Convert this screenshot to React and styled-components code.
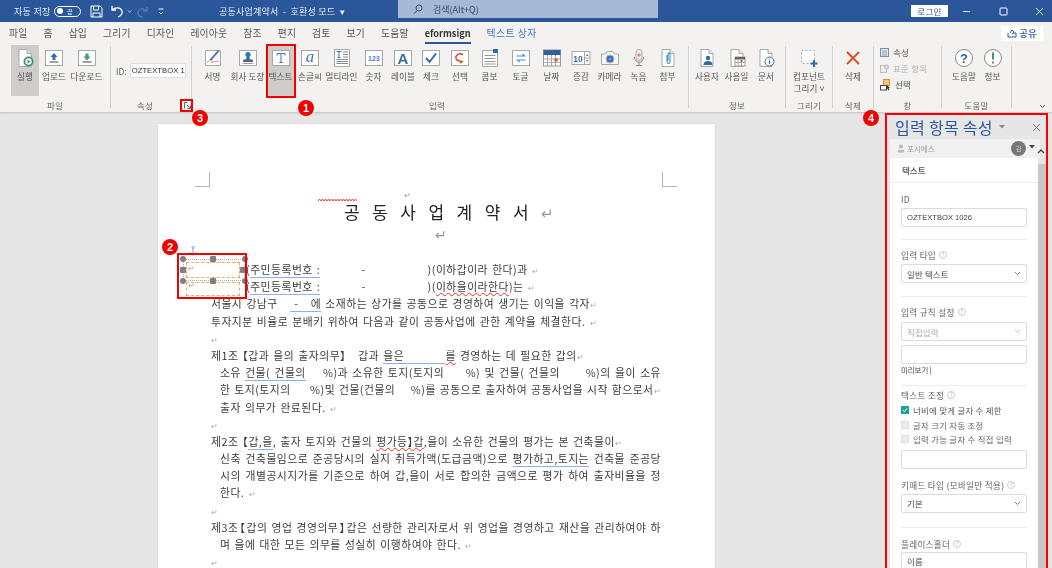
import React from "react";
import styled, { createGlobalStyle } from "styled-components";

const Global = createGlobalStyle`
  html, body { margin: 0; padding: 0; background: #e6e6e6; }
  body { font-family: "Noto Sans CJK KR", "Noto Sans", sans-serif; }
  * { box-sizing: border-box; }
`;

const Screen = styled.div`
  position: relative; width: 1052px; height: 568px; overflow: hidden;
  display: flex; flex-direction: column; color: #444; background: #e6e6e6; filter: blur(0.3px);
`;

/* ---- title bar ---- */
const TitleBar = styled.header`
  height: 22px; background: #2b579a; color: #e8edf5; display: flex; align-items: center;
  font-size: 9px; flex: none;
`;
const AutoSave = styled.span`margin-left: 14px; width: 40px; letter-spacing: .3px;`;
const Toggle = styled.span`
  width: 27px; height: 11px; border: 1px solid #fff; border-radius: 6px; display: flex;
  align-items: center; padding-left: 2px; font-size: 6px; gap: 4px;
  &::before { content: ""; width: 6px; height: 6px; border-radius: 50%; background: #fff; }
`;
const QuickIcon = styled.span`
  margin-left: ${p => p.$ml}px; display: flex; align-items: center;
  opacity: ${p => (p.$dim ? 0.3 : 1)};
`;
const DocTitle = styled.div`margin-left: 55px; width: 179px; font-size: 9px; white-space: pre; letter-spacing: .2px;`;
const SearchBox = styled.div`
  width: 260px; height: 18px; margin-top: -4px; background: #a7b9d4; color: #2f4a73; display: flex; align-items: center;
  padding-left: 15px; gap: 10px; font-size: 9px;
`;
const LoginButton = styled.button`
  margin-left: 253px; width: 37px; height: 12px; background: #fff; color: #2b579a; border: 0; padding: 0;
  font: 8.5px/12px "Noto Sans CJK KR", sans-serif; letter-spacing: .4px;
`;
const WindowControls = styled.div`
  display: flex; margin-left: 14px; width: 88px; justify-content: space-between; align-items: center; padding-right: 6px;
`;

/* ---- tabs ---- */
const TabRow = styled.nav`
  height: 22px; background: #f3f2f1; display: flex; align-items: center; padding-left: 9px; gap: 16px; flex: none;
  position: relative;
`;
const Tab = styled.span`
  font-size: ${p => (p.$active ? 9.2 : 9.8)}px; line-height: 22px; height: 22px; white-space: nowrap; letter-spacing: ${p => (p.$context ? ".5px" : p.$active ? 0 : ".2px")};
  color: ${p => (p.$context ? "#3e78c4" : p.$active ? "#333" : "#555")};
  font-weight: ${p => (p.$active ? 700 : 400)};
  border-bottom: ${p => (p.$active ? "2px solid #2b579a" : "0")};
`;
const ShareButton = styled.button`
  margin-left: auto; margin-right: 9px; width: 42px; height: 15px; background: #fff; border: 0; color: #2b579a;
  font: 500 9.5px/15px "Noto Sans CJK KR", sans-serif; display: flex; align-items: center; justify-content: center; gap: 2px; padding: 0;
`;

/* ---- ribbon ---- */
const Ribbon = styled.section`
  height: 68px; background: #f3f2f1; display: flex; padding-top: 2px; flex: none; position: relative;
  box-shadow: 0 1px 2px rgba(0,0,0,.18); z-index: 1;
`;
const Group = styled.div`
  width: ${p => p.$w}px; height: 62px; border-right: 1px solid #d2d0ce; display: flex; flex-direction: column; flex: none;
`;
const GroupBody = styled.div`
  flex: 1; margin-top: -1px; display: flex; padding-left: ${p => p.$pl || 0}px; min-height: 0;
`;
const GroupLabel = styled.div`
  height: 12px; margin-bottom: -3px; line-height: 12px; font-size: 8.5px; color: #666; text-align: center;
  padding-right: ${p => p.$pr || 0}px; letter-spacing: .3px;
`;
const Tool = styled.button`
  width: ${p => p.$w}px; height: 51px; border: 0; padding: 3px 0 0; display: flex; flex-direction: column; align-items: center;
  background: ${p => (p.$on ? "#cfcdcb" : "transparent")}; color: ${p => (p.$dim ? "#aaa" : "#555")};
  font: 8.6px/12px "Noto Sans CJK KR", sans-serif; flex: none; white-space: nowrap; letter-spacing: .1px;
  svg { display: block; margin-bottom: 2px; flex: none; }
`;
const IdField = styled.div`
  display: flex; align-items: center; margin-top: 18px; height: 15px; padding-left: 5px; font-size: 8.5px; color: #666; gap: 3px;
`;
const IdInput = styled.div`
  width: 56px; height: 15px; background: #fff; border: 1px solid #e1dfdd; color: #333; font: 7.7px/13px "Liberation Sans", sans-serif;
  padding-left: 1px; white-space: nowrap;
`;
const MiniList = styled.div`display: flex; flex-direction: column; padding: 1px 0 0 6px; gap: 3px;`;
const MiniItem = styled.div`
  height: 13px; display: flex; align-items: center; gap: 4px; font-size: 8.5px; line-height: 13px;
  color: ${p => (p.$dim ? "#b5b3b1" : "#555")}; letter-spacing: .2px;
`;
const Collapse = styled.span`position: absolute; right: 6px; bottom: 3px; display: flex;`;

/* ---- main ---- */
const Main = styled.main`flex: 1; min-height: 0; display: flex; overflow: hidden; background: #e6e6e6;`;
const Page = styled.article`
  position: relative; margin: 12px 0 0 158px; width: 557px; height: 620px; background: #fff; flex: none; padding: 64px 54px 0 53px;
  font-size: 10.8px; line-height: 17.2px; color: #3c3c3c; box-shadow: 0 0 2px rgba(0,0,0,.1);
`;
const Crop = styled.i`
  position: absolute; top: 48px; width: 15px; height: 15px; border-bottom: 1px solid #b5b5b5;
  ${p => (p.$right ? "left: 504px; border-left: 1px solid #b5b5b5;" : "left: 37px; border-right: 1px solid #b5b5b5;")}
`;
const TitleWave = styled.span`position: absolute; left: 160px; top: 74px; display: flex;`;
const MarkLine = styled.div`
  height: ${p => p.$h}px; line-height: ${p => p.$h}px; margin-bottom: ${p => p.$mb || 0}px; padding-left: ${p => p.$pl}px; color: #999; font-size: ${p => p.$fs || 9}px;
`;
const TitleLine = styled.h1`
  margin: 0; height: 21px; padding-left: 133px; font: 400 17px/21px "Noto Sans CJK KR", sans-serif; color: #222; white-space: pre;
  word-spacing: 8.7px;
`;
const TitleMark = styled.span`color: #999; font-size: 15px;`;
const Line = styled.div`
  height: 17.2px; white-space: pre; padding-left: ${p => p.$indent || 0}px; word-spacing: ${p => (p.$fit ? 0 : 1.2)}px;
  letter-spacing: .5px; font-feature-settings: "halt";
  ${p => (p.$fit ? "text-align: justify; text-align-last: justify; white-space: pre-wrap;" : "")}
`;
const Pilcrow = styled.span`color: #aaa; font-size: 8px;`;
const Blue = styled.span`border-bottom: 1.5px solid #8fb1e6;`;
const Wavy = styled.span`text-decoration: underline wavy #e03030; text-decoration-thickness: 1px; text-underline-offset: 1px;`;

/* ---- task pane ---- */
const Pane = styled.aside`
  margin: 1px 4px 0 auto; width: 163px; flex: none; border: 2px solid #ff0000; border-bottom: 0; background: #e6e6e6; display: flex; flex-direction: column; min-height: 0;
  position: relative;
`;
const PaneHead = styled.div`
  height: 24px; display: flex; align-items: center; padding-left: 8px; flex: none;
`;
const PaneTitle = styled.h2`
  margin: 0; font: 400 16px/22px "Noto Sans CJK KR", sans-serif; color: #2b579a; white-space: nowrap; letter-spacing: .3px;
`;
const PaneUser = styled.div`
  height: 19px; margin: 0 6px 0 3px; background: #f1f1f1; display: flex; align-items: center; padding-left: 7px; font-size: 7.5px; color: #999; gap: 2px; flex: none; position: relative;
`;
const Avatar = styled.span`
  position: absolute; left: 121px; top: 2px; width: 15px; height: 15px; border-radius: 50%; background: #777; color: #ddd;
  font-size: 6px; line-height: 15px; text-align: center;
`;
const UserCaret = styled.span`position: absolute; left: 139px; top: 6px; display: flex;`;
const PaneBody = styled.div`flex: 1; display: flex; min-height: 0; padding-left: 3px;`;
const Form = styled.div`width: 148px; background: #fff; flex: none; overflow: hidden;`;
const FormHead = styled.div`
  height: 25px; border-bottom: 1px solid #ececec; padding-left: 12px; font-size: 8.5px; line-height: 24px; font-weight: 500; color: #555;
`;
const Section = styled.div`
  margin: 0 11px; padding-top: ${p => p.$pt}px; padding-bottom: ${p => p.$pb || 0}px; border-bottom: ${p => (p.$end ? "1px solid #ececec" : 0)};
`;
const FieldLabel = styled.div`
  height: 12px; line-height: 12px; margin-top: ${p => p.$mt || 0}px; margin-bottom: ${p => p.$mb ?? 3}px; font-size: 8.6px; color: #666; display: flex; align-items: center; gap: 3px;
  letter-spacing: .3px; white-space: nowrap;
`;
const Hint = styled.span`
  width: 8px; height: 8px; border-radius: 50%; border: 1px solid #ccc; color: #bbb; font-size: 6px; line-height: 6px; text-align: center; flex: none;
`;
const TextBox = styled.div`
  height: 19px; margin-top: ${p => p.$mt || 0}px; border: 1px solid #dcdcdc; border-radius: 2px; background: #fff; display: flex; align-items: center; justify-content: space-between;
  padding: 0 5px 0 5px; font-size: 8.4px; color: ${p => (p.$dim ? "#aaa" : "#444")}; white-space: nowrap; letter-spacing: .2px;
`;
const LatinValue = styled.span`font: 7.6px "Liberation Sans", sans-serif; letter-spacing: 0;`;
const Preview = styled.div`height: 12px; font-size: 7.4px; line-height: 12px; color: #444;`;
const CheckRow = styled.div`
  height: 14.5px; display: flex; align-items: center; gap: 4px; font-size: 8.4px; color: ${p => (p.$on ? "#555" : "#666")}; white-space: nowrap; letter-spacing: .3px;
`;
const CheckBox = styled.span`
  width: 8px; height: 8px; flex: none; background: ${p => (p.$on ? "#1aa39a" : "#ececec")}; border: 1px solid ${p => (p.$on ? "#1aa39a" : "#ddd")};
  display: flex; align-items: center; justify-content: center;
`;
const ScrollTrack = styled.div`
  flex: none; width: 8px; background: #c8c8c8; margin-top: 6px;
`;
const ScrollUp = styled.span`position: absolute; right: 1px; top: 34px; z-index: 2; display: flex;`;
const PaneClose = styled.span`margin-left: auto; margin-right: 5px; display: flex;`;

/* ---- annotations ---- */
const Badge = styled.span`
  position: absolute; left: ${p => p.$x - 8}px; top: ${p => p.$y - 8}px; width: 16px; height: 16px; border-radius: 50%;
  background: #f00000; color: #fff; font: 700 11px/16px "Liberation Sans", sans-serif; text-align: center; z-index: 5;
`;
const RedBox = styled.div`
  position: absolute; left: ${p => p.$x}px; top: ${p => p.$y}px; width: ${p => p.$w}px; height: ${p => p.$h}px;
  border: 2px solid #f00000; z-index: 4;
`;
const FieldFrame = styled.div`
  position: absolute; left: ${p => p.$x}px; top: ${p => p.$y}px; width: ${p => p.$w}px; height: ${p => p.$h}px;
  border: 1px ${p => (p.$grey ? "dotted #aaa" : "dashed #f5a55c")}; z-index: 3;
`;
const Handle = styled.i`
  position: absolute; left: ${p => p.$x - 3}px; top: ${p => p.$y - 3}px; width: 6px; height: 6px; background: #7f7f7f;
  border-radius: ${p => (p.$round ? "50%" : "1px")}; z-index: 3;
`;
const FloatingMark = styled.span`
  position: absolute; left: ${p => p.$x}px; top: ${p => p.$y}px; font-size: 8px; line-height: 10px; color: #aaa; z-index: 3;
`;
const AnchorMark = styled.span`position: absolute; left: 189px; top: 246px; display: flex; z-index: 3;`;

/* ---- icons ---- */
const Frame = ({ children, fill = "#fff" }) => (
  <>
    <rect x="1.5" y="2.5" width="17" height="15" fill={fill} stroke="#a8a8a8" />
    {children}
  </>
);
const Paper = ({ children }) => (
  <>
    <path d="M4 1.5h8l4 4v13H4z" fill="#fff" stroke="#a8a8a8" />
    <path d="M12 1.5v4h4" fill="#eee" stroke="#a8a8a8" />
    {children}
  </>
);
const ICONS = {
  run: <Paper><circle cx="13.5" cy="13.5" r="5" fill="#3f8f6f" /><circle cx="13.5" cy="13.5" r="3.2" fill="#fff" /><path d="M12.5 11.5l3 2-3 2z" fill="#3f8f6f" /></Paper>,
  upload: <Frame><path d="M10 5l3.5 4H11.5v3h-3V9H6.5z" fill="#2b6cb0" /><path d="M5.5 14h9" stroke="#777" strokeWidth="1.4" /></Frame>,
  download: <Frame><path d="M10 12.5l3.5-4H11.5v-3h-3v3H6.5z" fill="#4c9a6a" /><path d="M5.5 14h9" stroke="#777" strokeWidth="1.4" /></Frame>,
  sign: <><path d="M2.5 2.5v15h15v-15z" fill="#fff" stroke="#a8a8a8" /><path d="M4 15c3-4 5-5 5-3s-2 3 1 2 5 0 6-1" fill="none" stroke="#e38f7c" /><path d="M7 11l8-9 1.5 1.2-8 9-2 .6z" fill="#4f7cb8" /></>,
  stamp: <Frame><circle cx="10" cy="6.5" r="2.6" fill="#3a6ea8" /><path d="M8.8 8h2.4l.6 3 3.2 1v2H5v-2l3.2-1z" fill="#3a6ea8" /><path d="M4.5 15.5h11" stroke="#e38f7c" /></Frame>,
  text: <Frame><path d="M6 5.5h8v2M6 7.5v-2M10 5.5v9M8.2 14.5h3.6" fill="none" stroke="#3f78b8" /></Frame>,
  hand: <Frame><text x="10" y="14" textAnchor="middle" fontFamily="Liberation Serif" fontStyle="italic" fontSize="17" fill="#3f78b8">a</text></Frame>,
  multi: <><path d="M2.5 1.5h15v17h-15z" fill="#fff" stroke="#a8a8a8" /><path d="M4.5 3.5h5M7 3.5v6M5.5 9.5h3" stroke="#3f78b8" fill="none" /><path d="M11 4h5M11 6.5h5M11 9h5M4.5 11.5h11.5M4.5 13.5h11.5M4.5 15.5h11.5" stroke="#888" /></>,
  number: <Frame><text x="10" y="13" textAnchor="middle" fontFamily="Liberation Sans" fontWeight="700" fontSize="7" fill="#4f7cb8">123</text></Frame>,
  label: <Frame><text x="10" y="15.5" textAnchor="middle" fontFamily="Liberation Sans" fontWeight="700" fontSize="15" fill="#3a6ea8">A</text></Frame>,
  check: <Frame><path d="M5 10l3.5 4L15 5.5" fill="none" stroke="#2f6fb8" strokeWidth="2" /></Frame>,
  select: <Frame><path d="M13 7c-2-2-6-1-7 1.500s1.500 4.500 4 4.500l2 .5-2 1.500" fill="none" stroke="#d9512c" strokeWidth="1.600" /></Frame>,
  combo: <><path d="M2.500 2.500h15v16h-15z" fill="#fff" stroke="#a8a8a8" /><rect x="13" y="1" width="5" height="4" fill="#2b6cb0" /><path d="M4.500 7.500h11M4.500 10.500h11M4.500 13.500h11M4.500 16h11" stroke="#999" /></>,
  toggle: <Frame><path d="M5.500 8h8l-2-2M14.500 12h-8l2 2" fill="none" stroke="#3f8fd0" strokeWidth="1.200" /></Frame>,
  date: <><rect x="1.500" y="2" width="17" height="16" fill="#fff" stroke="#999" /><rect x="1.500" y="2" width="17" height="5" fill="#2f5f9f" /><path d="M5.500 7v11M9.500 7v11M13.500 7v11M1.500 11h17M1.500 14.500h17" stroke="#aaa" /><rect x="12.500" y="10.500" width="3" height="3" fill="#d9512c" /></>,
  spin: <><rect x="1" y="3.500" width="18" height="13" fill="#fff" stroke="#a8a8a8" /><text x="7" y="13.500" textAnchor="middle" fontFamily="Liberation Sans" fontWeight="700" fontSize="8.500" fill="#2f6fb8">10</text><path d="M13.500 3.500v13M13.500 10h5.500" stroke="#a8a8a8" /><path d="M15 8l1.200-2 1.200 2zM15 12l1.200 2 1.200-2z" fill="#666" /></>,
  camera: <><path d="M1.500 6h4l1.500-2.500h6L14.500 6h4v10.500h-17z" fill="#f7f7f7" stroke="#a8a8a8" /><circle cx="10" cy="11" r="4" fill="#2f6fb8" stroke="#bbb" /><circle cx="10" cy="11" r="1.500" fill="#6a9bd8" /></>,
  mic: <><rect x="7" y="1.500" width="6" height="11" rx="3" fill="#eee" stroke="#aaa" /><circle cx="10" cy="7" r="1.800" fill="#e38f7c" /><path d="M5.500 9c0 7 9 7 9 0M10 14v3M7 17.500h6" fill="none" stroke="#888" /></>,
  attach: <Paper><path d="M9 7v7c0 2 3 2 3 0V6c0-1.500-2-1.500-2 0v7" fill="none" stroke="#3f8fd0" strokeWidth="1.100" /></Paper>,
  user: <Paper><circle cx="11" cy="10" r="2.200" fill="#2b6cb0" /><path d="M6.500 17c0-3 2-4 4.500-4s4.500 1 4.500 4z" fill="#2b6cb0" /></Paper>,
  userDate: <Paper><rect x="8" y="9" width="10" height="9" fill="#fff" stroke="#999" /><rect x="8" y="9" width="10" height="2.500" fill="#666" /><path d="M11 11.500v6.500M14.500 11.500v6.500M8 14.500h10" stroke="#aaa" /><rect x="13.500" y="12" width="2" height="2" fill="#d9512c" /></Paper>,
  doc: <Paper><circle cx="13.500" cy="13.500" r="4.500" fill="#fff" stroke="#3f6fa8" /><path d="M13.500 12.500v3.500M13.500 10.500v1" stroke="#3f6fa8" strokeWidth="1.200" /></Paper>,
  comp: <><rect x="2.500" y="2.500" width="13" height="13" fill="#fff" stroke="#aaa" strokeDasharray="2 2" /><path d="M15 12v7M11.500 15.500h7" stroke="#2b6cb0" strokeWidth="2" /></>,
  del: <path d="M4 4l12 12M16 4L4 16" stroke="#d9512c" strokeWidth="2" />,
  help: <><circle cx="10" cy="10" r="8.500" fill="#fff" stroke="#888" /><text x="10" y="14.500" textAnchor="middle" fontFamily="Liberation Sans" fontWeight="700" fontSize="13" fill="#2f5f9f">?</text></>,
  info: <><circle cx="10" cy="10" r="8.500" fill="#fff" stroke="#888" /><path d="M10 4.500v7" stroke="#4c9a6a" strokeWidth="2" /><path d="M10 13.500v2" stroke="#4c9a6a" strokeWidth="2" /></>,
};
const Icon = ({ name, size = 20 }) => <svg width={size} height={size} viewBox="0 0 20 20">{ICONS[name]}</svg>;

const Stroke = ({ w = 12, h = 12, vb = "0 0 12 12", children, color = "#fff", sw = 1 }) => (
  <svg width={w} height={h} viewBox={vb} fill="none" stroke={color} strokeWidth={sw}>{children}</svg>
);
const Caret = ({ color = "#888" }) => <svg width="6" height="4" viewBox="0 0 6 4"><path d="M0 0h6L3 3.500z" fill={color} /></svg>;
const Chev = ({ color = "#888", w = 7 }) => <svg width={w} height="5" viewBox="0 0 7 5" fill="none" stroke={color}><path d="M1 1l2.500 2.500L6 1" /></svg>;
const SelectBox = ({ children, dim }) => <TextBox $dim={dim}>{children}<Chev color={dim ? "#bbb" : "#777"} /></TextBox>;

const TABS = ["파일", "홈", "삽입", "그리기", "디자인", "레이아웃", "참조", "편지", "검토", "보기", "도움말"];
const INPUT_TOOLS = [
  ["sign", "서명", 33], ["stamp", "회사 도장", 37], ["text", "텍스트", 29], ["hand", "손글씨", 30], ["multi", "멀티라인", 33],
  ["number", "숫자", 31], ["label", "레이블", 28], ["check", "체크", 28], ["select", "선택", 30], ["combo", "콤보", 29],
  ["toggle", "토글", 33], ["date", "날짜", 29], ["spin", "증감", 30], ["camera", "카메라", 27], ["mic", "녹음", 31], ["attach", "첨부", 27],
];
const WAVE = "M0 3" + "l1.500-2 1.500 2".repeat(13);
const P = () => <Pilcrow>↵</Pilcrow>;

export default function App() {
  return (
    <Screen>
      <Global />
      <TitleBar>
        <AutoSave>자동 저장</AutoSave>
        <Toggle>끔</Toggle>
        <QuickIcon $ml={9}><Stroke w={13} h={13} vb="0 0 13 13"><path d="M1 1h9l2 2v9H1zM3.500 1v4h5V1M3 12V8h7v4" /></Stroke></QuickIcon>
        <QuickIcon $ml={7}><Stroke w={14} h={14} vb="0 0 14 14" sw={1.300}><path d="M2 2v4h4M2 6c3-3 9-3 10 1 .6 3-1.500 5-4 6" /></Stroke></QuickIcon>
        <QuickIcon $ml={3}><Chev color="#fff" w={5} /></QuickIcon>
        <QuickIcon $ml={4} $dim><Stroke w={13} h={13} vb="0 0 13 13"><path d="M11 2v4H7M11 6C8 3 3 3 2 7c-.6 3 1.500 5 4 5" /></Stroke></QuickIcon>
        <QuickIcon $ml={9}><Stroke w={6} h={7} vb="0 0 6 7"><path d="M0.500 1h5" /><path d="M1 4l2 2 2-2" /></Stroke></QuickIcon>
        <DocTitle>공동사업계약서  -  호환성 모드  ▾</DocTitle>
        <SearchBox>
          <Stroke w={10} h={11} vb="0 0 10 11" color="#2f4a73"><circle cx="6" cy="4" r="3" /><path d="M4 6.500L0.800 10" /></Stroke>
          <span>검색(Alt+Q)</span>
        </SearchBox>
        <LoginButton>로그인</LoginButton>
        <WindowControls>
          <Stroke w={9} h={9} vb="0 0 9 9"><path d="M1 4.500h7" /></Stroke>
          <Stroke w={9} h={9} vb="0 0 9 9"><rect x="1" y="1" width="7" height="7" rx="1" /></Stroke>
          <Stroke w={9} h={9} vb="0 0 9 9"><path d="M1 1l7 7M8 1L1 8" /></Stroke>
        </WindowControls>
      </TitleBar>

      <TabRow>
        {TABS.map(t => <Tab key={t}>{t}</Tab>)}
        <Tab $active>eformsign</Tab>
        <Tab $context>텍스트 상자</Tab>
        <ShareButton>
          <Stroke w={10} h={9} vb="0 0 10 9" color="#2b579a"><path d="M1 4v4h8V4H6M3 4l2-3 2 2-2 2" /></Stroke>
          공유
        </ShareButton>
      </TabRow>

      <Ribbon>
        <Group $w={111}>
          <GroupBody $pl={11}>
            <Tool $w={28} $on><Icon name="run" />실행</Tool>
            <Tool $w={30}><Icon name="upload" />업로드</Tool>
            <Tool $w={35}><Icon name="download" />다운로드</Tool>
          </GroupBody>
          <GroupLabel>파일</GroupLabel>
        </Group>
        <Group $w={81}>
          <GroupBody>
            <IdField>ID:<IdInput>OZTEXTBOX 1</IdInput></IdField>
          </GroupBody>
          <GroupLabel $pr={12}>속성</GroupLabel>
        </Group>
        <Group $w={497}>
          <GroupBody $pl={4}>
            {INPUT_TOOLS.map(([icon, label, w]) => (
              <Tool key={label} $w={w} $on={label === "텍스트"}><Icon name={icon} />{label}</Tool>
            ))}
          </GroupBody>
          <GroupLabel $pr={6}>입력</GroupLabel>
        </Group>
        <Group $w={97}>
          <GroupBody $pl={3}>
            <Tool $w={30}><Icon name="user" />사용자</Tool>
            <Tool $w={29}><Icon name="userDate" />사용일</Tool>
            <Tool $w={30}><Icon name="doc" />문서</Tool>
          </GroupBody>
          <GroupLabel>정보</GroupLabel>
        </Group>
        <Group $w={47}>
          <GroupBody>
            <Tool $w={46}><Icon name="comp" />컴포넌트<br />그리기 ˅</Tool>
          </GroupBody>
          <GroupLabel>그리기</GroupLabel>
        </Group>
        <Group $w={41}>
          <GroupBody>
            <Tool $w={40}><Icon name="del" />삭제</Tool>
          </GroupBody>
          <GroupLabel>삭제</GroupLabel>
        </Group>
        <Group $w={68}>
          <GroupBody>
            <MiniList>
              <MiniItem>
                <svg width="9" height="9" viewBox="0 0 9 9"><rect x=".5" y=".5" width="8" height="8" fill="#dfe9f5" stroke="#8a8a8a" /><path d="M2 3h5M2 5h5M2 7h5" stroke="#7a9cc6" /></svg>
                속성
              </MiniItem>
              <MiniItem $dim>
                <svg width="9" height="9" viewBox="0 0 9 9"><rect x=".5" y="1.500" width="6" height="7" fill="#eee" stroke="#bbb" /><circle cx="6.500" cy="3" r="2" fill="#ddd" stroke="#bbb" /></svg>
                표준 항목
              </MiniItem>
              <MiniItem>
                <svg width="11" height="12" viewBox="0 0 11 12"><rect x="3.500" y=".5" width="6" height="6" fill="#f6c56c" stroke="#dc8f2c" /><rect x=".5" y="6.500" width="6" height="4.500" fill="#fff" stroke="#444" /><path d="M7 6l3 3-1.500.2.8 1.800-1 .4-.8-1.800-1 1z" fill="#333" /></svg>
                선택
              </MiniItem>
            </MiniList>
          </GroupBody>
          <GroupLabel>창</GroupLabel>
        </Group>
        <Group $w={70}>
          <GroupBody $pl={7}>
            <Tool $w={30}><Icon name="help" />도움말</Tool>
            <Tool $w={27}><Icon name="info" />정보</Tool>
          </GroupBody>
          <GroupLabel>도움말</GroupLabel>
        </Group>
        <Collapse><Chev color="#555" /></Collapse>
      </Ribbon>

      <Main>
        <Page>
          <Crop />
          <Crop $right />
          <TitleWave>
            <svg width="39" height="4" viewBox="0 0 39 4" fill="none" stroke="#ee4040"><path d={WAVE} /></svg>
          </TitleWave>
          <MarkLine $h={13} $pl={193} $fs={8}>↵</MarkLine>
          <TitleLine>공 동 사 업 계 약 서 <TitleMark>↵</TitleMark></TitleLine>
          <MarkLine $h={25} $mb={14} $pl={224} $fs={14}>↵</MarkLine>
          <Line $indent={35}>(<Blue>주민등록번호 :</Blue>          -               )(이하갑이라 한다)과 <P /></Line>
          <Line $indent={35}>(<Blue>주민등록번호 :</Blue>          -               )(<Wavy>이하을이라한다</Wavy>)는 <P /></Line>
          <Line>서울시 강남구   <Blue> -   에</Blue> 소재하는 상가를 공동으로 경영하여 생기는 이익을 각자<P /></Line>
          <Line>투자지분 비율로 분배키 위하여 다음과 같이 공동사업에 관한 계약을 체결한다. <P /></Line>
          <Line><P /></Line>
          <Line>제1조 【갑과 을의 출자의무】   갑과 <Blue>을은          </Blue><Wavy>를</Wavy> 경영하는 데 필요한 갑의<P /></Line>
          <Line $indent={9} $fit>소유 <Blue>건물( 건물의</Blue>    %)과 소유한 토지(토지의     %) 및 건물( 건물의      %)의 을이 소유</Line>
          <Line $indent={9} $fit>한 토지(토지의     %)및 건물(건물의    %)를 공동으로 출자하여 공동사업을 시작 함으로서<P /></Line>
          <Line $indent={9}>출자 의무가 완료된다. <P /></Line>
          <Line><P /></Line>
          <Line>제2조 【<Blue>갑,을</Blue>, 출자 토지와 건물의 <Wavy>평가등】갑</Wavy>,을이 소유한 건물의 평가는 본 건축물이<P /></Line>
          <Line $indent={9} $fit>신축 건축물임으로 준공당시의 실지 취득가액(도급금액)으로 <Blue>평가하고,토지는</Blue> 건축물 준공당</Line>
          <Line $indent={9} $fit>시의 개별공시지가를 기준으로 하여 갑,을이 서로 합의한 금액으로 평가 하여 출자비율을 정</Line>
          <Line $indent={9}>한다. <P /></Line>
          <Line><P /></Line>
          <Line $fit>제3조【갑의 영업 경영의무】갑은 선량한 관리자로서 위 영업을 경영하고 재산을 관리하여야 하</Line>
          <Line $indent={9}>며 을에 대한 모든 의무를 성실히 이행하여야 한다. <P /></Line>
          <Line><P /></Line>
        </Page>

        <Pane>
          <PaneHead>
            <PaneTitle>입력 항목 속성</PaneTitle>
            <QuickIcon $ml={6}><Caret /></QuickIcon>
            <PaneClose><Stroke w={9} h={9} vb="0 0 9 9" color="#777"><path d="M1 1l7 7M8 1L1 8" /></Stroke></PaneClose>
          </PaneHead>
          <PaneUser>
            <svg width="8" height="9" viewBox="0 0 8 9"><circle cx="4" cy="2.500" r="2" fill="#bbb" /><path d="M1 8.500V6h6v2.500z" fill="#bbb" /></svg>
            포시에스
            <Avatar>김</Avatar>
            <UserCaret><Caret color="#444" /></UserCaret>
          </PaneUser>
          <ScrollUp><svg width="8" height="5" viewBox="0 0 8 5" fill="none" stroke="#444" strokeWidth="1.300"><path d="M1 4l3-3 3 3" /></svg></ScrollUp>
          <PaneBody>
            <Form>
              <FormHead>텍스트</FormHead>
              <Section $pt={10} $pb={12} $end>
                <FieldLabel>ID</FieldLabel>
                <TextBox><LatinValue>OZTEXTBOX 1026</LatinValue></TextBox>
              </Section>
              <Section $pt={9} $pb={13} $end>
                <FieldLabel>입력 타입 <Hint>?</Hint></FieldLabel>
                <SelectBox>일반 텍스트</SelectBox>
              </Section>
              <Section $pt={9} $pb={9} $end>
                <FieldLabel $mb={4}>입력 규칙 설정 <Hint>?</Hint></FieldLabel>
                <SelectBox dim>직접입력</SelectBox>
                <TextBox $mt={4} />
                <Preview>미리보기 |</Preview>
              </Section>
              <Section $pt={3}>
                <FieldLabel $mb={2}>텍스트 조정 <Hint>?</Hint></FieldLabel>
                <CheckRow $on>
                  <CheckBox $on><svg width="6" height="6" viewBox="0 0 6 6"><path d="M.8 3l1.500 1.700L5.200 1.200" fill="none" stroke="#fff" /></svg></CheckBox>
                  너비에 맞게 글자 수 제한
                </CheckRow>
                <CheckRow><CheckBox />글자 크기 자동 조정</CheckRow>
                <CheckRow><CheckBox />입력 가능 글자 수 직접 입력</CheckRow>
                <TextBox $mt={3} />
              </Section>
              <Section $pt={10} $pb={14} $end>
                <FieldLabel>키패드 타입 (모바일만 적용) <Hint>?</Hint></FieldLabel>
                <SelectBox>기본</SelectBox>
              </Section>
              <Section $pt={10}>
                <FieldLabel $mb={2}>플레이스홀더 <Hint>?</Hint></FieldLabel>
                <TextBox>이름</TextBox>
              </Section>
            </Form>
            <ScrollTrack />
          </PaneBody>
        </Pane>
      </Main>

      <RedBox $x={266} $y={44} $w={30} $h={54} />
      <RedBox $x={180} $y={99} $w={13} $h={13} />
      <RedBox $x={177} $y={253} $w={70} $h={46} />
      <FloatingMark $x={184} $y={101}>
        <svg width="7" height="7" viewBox="0 0 7 7"><path d="M.5 6.500v-6h3M6.500 3.500v3h-3M3 3l3 3" fill="none" stroke="#666" /></svg>
      </FloatingMark>

      <FieldFrame $grey $x={183} $y={259} $w={62} $h={22} />
      <FieldFrame $x={186} $y={262} $w={54} $h={16} />
      <FieldFrame $x={186} $y={282} $w={54} $h={14} />
      {[[183, 259], [245, 259], [183, 281], [245, 281]].map(([x, y]) => <Handle key={`${x}${y}`} $x={x} $y={y} $round />)}
      {[[213, 259], [183, 270], [243, 270], [213, 281]].map(([x, y]) => <Handle key={`${x}${y}`} $x={x} $y={y} />)}
      <FloatingMark $x={188} $y={263}>↵</FloatingMark>
      <FloatingMark $x={188} $y={280}>↵</FloatingMark>
      <AnchorMark>
        <svg width="8" height="10" viewBox="0 0 8 10" fill="none" stroke="#6aa5dc"><circle cx="4" cy="1.500" r="1" /><path d="M4 2.500V9M1 6c0 2 1.500 3 3 3s3-1 3-3" /></svg>
      </AnchorMark>

      <Badge $x={306} $y={108}>1</Badge>
      <Badge $x={170} $y={247}>2</Badge>
      <Badge $x={200} $y={118}>3</Badge>
      <Badge $x={871} $y={118}>4</Badge>
    </Screen>
  );
}
